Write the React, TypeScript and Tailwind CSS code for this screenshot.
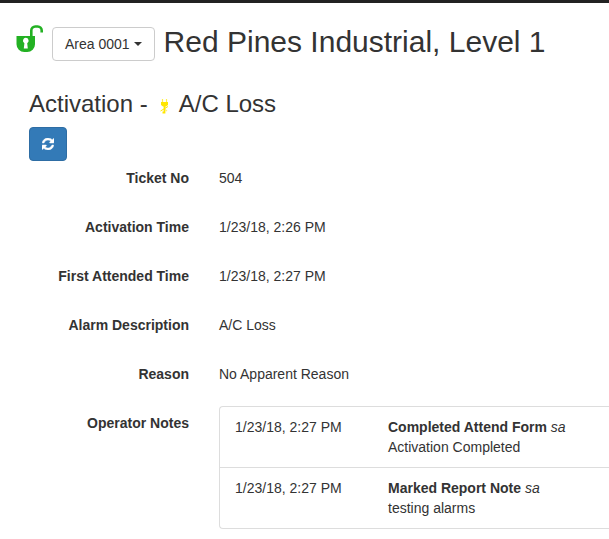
import type { ReactNode } from 'react';

interface OperatorNote {
  time: string;
  title: string;
  user: string;
  text: string;
}

const fields = [
  { label: 'Ticket No', value: '504' },
  { label: 'Activation Time', value: '1/23/18, 2:26 PM' },
  { label: 'First Attended Time', value: '1/23/18, 2:27 PM' },
  { label: 'Alarm Description', value: 'A/C Loss' },
  { label: 'Reason', value: 'No Apparent Reason' },
];

const notes: OperatorNote[] = [
  { time: '1/23/18, 2:27 PM', title: 'Completed Attend Form', user: 'sa', text: 'Activation Completed' },
  { time: '1/23/18, 2:27 PM', title: 'Marked Report Note', user: 'sa', text: 'testing alarms' },
];

function UnlockIcon() {
  return (
    <svg viewBox="0 0 27 27" className="mt-0.5 h-[27px] w-[27px] shrink-0" aria-hidden="true">
      <path d="M15.300 12V5.500a4 4 0 0 1 4-4h2.400a4 4 0 0 1 4 4v2" fill="none" stroke="#23b123" strokeWidth="2.600" />
      <path d="M.5 11h18.500v8.200a7.800 7.800 0 0 1-7.800 7.800H8.300A7.800 7.800 0 0 1 .5 19.200z" fill="#23b123" />
      <path d="M9.800 12.800a2.900 2.900 0 0 1 1.400 5.400l.6 5.200H7.800l.6-5.200a2.900 2.900 0 0 1 1.400-5.400z" fill="#fff" />
    </svg>
  );
}

function PowerLossIcon() {
  return (
    <svg viewBox="0 0 9 15" className="mt-1 h-[15px] w-[9px] shrink-0" aria-hidden="true">
      <path d="M2.500 0v3M6.500 0v3" stroke="#fff04a" strokeWidth="1.200" />
      <path d="M1 3h7v3L6 7.500H3L1 6z" fill="#ffe600" />
      <path d="M4.500 7v6.500H2.500" fill="none" stroke="#ffe600" strokeWidth="1.800" />
      <path d="M.5 12l7.500-4.500" stroke="#ffe600" strokeWidth="1" />
      <path d="M5 10.500l2 1.500" stroke="#ffef70" strokeWidth="1.200" />
    </svg>
  );
}

function RefreshIcon() {
  return (
    <svg viewBox="0 0 1536 1536" className="h-3 w-3" fill="currentColor" stroke="currentColor" strokeWidth="60" aria-hidden="true">
      <path d="M1511 928q0 5-1 7-64 268-268 434.500T764 1536q-146 0-282.500-55T238 1324l-129 129q-19 19-45 19t-45-19-19-45V960q0-26 19-45t45-19h448q26 0 45 19t19 45-19 45l-137 137q71 66 161 102t187 36q134 0 250-65t186-179q11-17 53-117 8-23 30-23h192q13 0 22.500 9.500t9.500 22.500zm25-800v448q0 26-19 45t-45 19h-448q-26 0-45-19t-19-45 19-45l138-138Q969 256 768 256q-134 0-250 65T332 500q-11 17-53 117-8 23-30 23H50q-13 0-22.500-9.500T18 608v-7q65-268 270-434.500T768 0q146 0 284 55.500T1297 212l130-129q19-19 45-19t45 19 19 45z" />
    </svg>
  );
}

function FieldRow({ label, children }: { label: string; children: ReactNode }) {
  return (
    <div className="flex gap-[30px]">
      <dt className="w-40 shrink-0 text-right font-bold">{label}</dt>
      <dd className="min-w-0 flex-1">{children}</dd>
    </div>
  );
}

export default function App() {
  return (
    <div className="overflow-x-hidden bg-white font-['Liberation_Sans',Arial,sans-serif] text-sm leading-5 text-[#333]">
      <div className="h-[3px] bg-[#222]" />

      <header className="flex items-start gap-[9px] px-4 pt-5">
        <UnlockIcon />
        <button
          type="button"
          className="mt-1 flex shrink-0 items-center gap-1 rounded border border-[#ccc] bg-white px-3 py-1.5"
        >
          Area 0001
          <svg viewBox="0 0 8 4" className="h-1 w-2" fill="currentColor" aria-hidden="true">
            <path d="M0 0h8L4 4z" />
          </svg>
        </button>
        <h1 className="text-[30px] leading-[38px]">Red Pines Industrial, Level 1</h1>
      </header>

      <main className="pt-7 pb-2 pl-[29px]">
        <h2 className="flex items-center text-2xl leading-[30px]">
          <span>Activation -</span>
          <span className="pr-2.5 pl-3">
            <PowerLossIcon />
          </span>
          <span>A/C Loss</span>
        </h2>
        <button
          type="button"
          aria-label="Refresh"
          className="mt-2 flex h-[34px] items-center rounded border border-[#2e6da4] bg-[#337ab7] px-3 text-white"
        >
          <RefreshIcon />
        </button>

        <dl className="mt-[7px] flex flex-col gap-[29px]">
          {fields.map((field) => (
            <FieldRow key={field.label} label={field.label}>
              {field.value}
            </FieldRow>
          ))}
          <FieldRow label="Operator Notes">
            <ul className="-mt-[7px] divide-y divide-[#ddd] rounded-l border border-r-0 border-[#ddd]">
              {notes.map((note) => (
                <li key={note.title} className="flex px-[15px] py-2.5">
                  <span className="w-[153px] shrink-0">{note.time}</span>
                  <div>
                    <strong>{note.title}</strong> <em>{note.user}</em>
                    <p>{note.text}</p>
                  </div>
                </li>
              ))}
            </ul>
          </FieldRow>
        </dl>
      </main>
    </div>
  );
}
